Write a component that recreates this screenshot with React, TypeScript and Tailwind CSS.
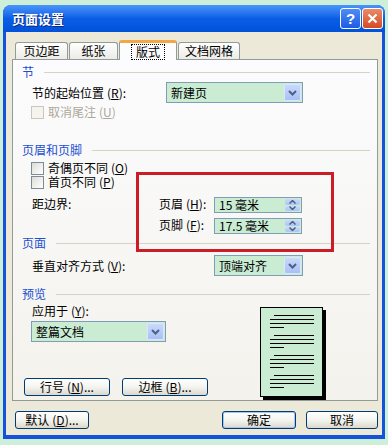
import type { ReactNode } from "react";

const Key = ({ k }: { k: string }) => (
    <span className="ml-[3px]">
        (<span className="underline">{k}</span>)
    </span>
);

const Arrow = () => (
    <svg width="9" height="6" viewBox="0 0 9 6">
        <path d="M1 1l3.5 3.5L8 1" stroke="#4d6185" strokeWidth="2" fill="none" />
    </svg>
);

const Combo = ({ text, w }: { text: string; w: string }) => (
    <div className={`${w} h-[21px] flex border border-[#7f9db9] bg-[#c9ecd3]`}>
        <div className="flex-1 pl-[4px] flex items-center">{text}</div>
        <div className="w-[17px] m-px flex items-center justify-center rounded-[2px] border border-[#dbe5fd] bg-gradient-to-b from-[#c9d9fc] to-[#a9c0f4]">
            <Arrow />
        </div>
    </div>
);

const SpinBtn = ({ up }: { up?: boolean }) => (
    <div className="flex-1 flex items-center justify-center rounded-[2px] bg-gradient-to-b from-[#c9d9fc] to-[#adc3f5]">
        <svg width="7" height="4" viewBox="0 0 7 4">
            <path d={up ? "M0.5 3.5L3.5 0.5L6.5 3.5" : "M0.5 0.5L3.5 3.5L6.5 0.5"} stroke="#4d6185" strokeWidth="1.5" fill="none" />
        </svg>
    </div>
);

const Spin = ({ text }: { text: string }) => (
    <div className="w-[88px] h-[16px] flex border border-[#7f9db9] bg-[#c9ecd3]">
        <div className="flex-1 pl-[4px] flex items-center leading-none">{text}</div>
        <div className="w-[15px] m-px flex flex-col gap-px">
            <SpinBtn up />
            <SpinBtn />
        </div>
    </div>
);

const Section = ({ title, className }: { title: string; className: string }) => (
    <div className={`flex items-center h-[14px] ${className}`}>
        <span className="text-[#1b4fd1] leading-none">{title}</span>
        <div className="flex-1 h-px bg-[#d6d3c6] ml-[10px] mr-[7px]" />
    </div>
);

const Check = ({ children, disabled, className }: { children: ReactNode; disabled?: boolean; className: string }) => (
    <div className={`flex items-center h-[14px] ml-[9px] ${className}`}>
        <div className={`w-[13px] h-[13px] border ${disabled ? "border-[#cac8bb] bg-[#f4f3ee]" : "border-[#7d8a98] bg-gradient-to-br from-[#dcdcd6] to-white"}`} />
        <span className={`ml-[4px] leading-none ${disabled ? "text-[#aca899]" : ""}`}>{children}</span>
    </div>
);

const Button = ({ children, w, main }: { children: ReactNode; w: string; main?: boolean }) => (
    <div className={`${w} h-[18px] rounded-[3px] border border-[#003c74] flex items-center justify-center bg-gradient-to-b from-white via-[#f4f4f0] to-[#dcd8cc] leading-none ${main ? "shadow-[inset_0_0_0_1px_#a9c4f2]" : ""}`}>
        {children}
    </div>
);

const Tab = ({ children, w }: { children: ReactNode; w: string }) => (
    <div className={`${w} h-[17px] mr-px border border-b-0 border-[#919b9c] rounded-t-[3px] bg-gradient-to-b from-white to-[#ecebe6] flex items-center justify-center leading-none`}>
        {children}
    </div>
);

const Page = () => (
    <div className="w-[63px] h-[90px] mt-[3px] ml-[38px] border border-black bg-[#c9ecd3] shadow-[3px_3px_0_#000] flex flex-col gap-[7px] pt-[7px] pl-[9px]">
        {[0, 1, 2, 3].map((g) => (
            <div key={g} className="flex flex-col gap-[3px]">
                <div className="ml-[4px] w-[40px] h-px bg-black" />
                <div className="w-[44px] h-px bg-black" />
                <div className="w-[44px] h-px bg-black" />
                <div className="w-[14px] h-px bg-black" />
            </div>
        ))}
    </div>
);

const App = () => {
    return (
        <div className="w-[388px] h-[445px] bg-[#cdeed8] pt-[5px] pl-[3px] font-['Noto_Sans_CJK_SC',sans-serif] text-[12px] text-black">
            <div className="w-[382px] h-[434px] rounded-t-[8px] bg-[#1552dc] flex flex-col">
                <div className="h-[27px] flex items-center pl-[9px] pr-[2px] rounded-t-[8px] bg-gradient-to-b from-[#4a95fb] via-[#0a5ee6] to-[#0251d9]">
                    <span className="text-white font-bold text-[13px] [text-shadow:1px_1px_#0a2a84]">页面设置</span>
                    <div className="ml-auto w-[21px] h-[21px] rounded-[3px] border border-white bg-gradient-to-b from-[#4f8cf6] to-[#1f5be2] flex items-center justify-center text-white font-bold text-[15px] leading-none font-['Liberation_Sans',sans-serif]">
                        ?
                    </div>
                    <div className="ml-px w-[21px] h-[21px] rounded-[3px] border border-white bg-gradient-to-b from-[#e98a68] to-[#d5481f] flex items-center justify-center">
                        <svg width="11" height="11" viewBox="0 0 11 11">
                            <path d="M1.5 1.5l8 8M9.5 1.5l-8 8" stroke="white" strokeWidth="2.2" />
                        </svg>
                    </div>
                </div>

                <div className="mx-[3px] mb-[4px] flex-1 bg-[#ece9d8] pt-[8px]">
                    <div className="flex items-end h-[19px] pl-[9px]">
                        <Tab w="w-[53px]">页边距</Tab>
                        <Tab w="w-[49px]">纸张</Tab>
                        <div className="w-[58px] h-[20px] -mb-px mr-px relative z-10 border border-b-0 border-[#919b9c] border-t-[3px] border-t-[#f2a842] rounded-t-[3px] bg-[#fcfcfe] flex items-center justify-center leading-none">
                            <span className="border border-dotted border-black px-[4px] py-px">版式</span>
                        </div>
                        <Tab w="w-[62px]">文档网格</Tab>
                    </div>

                    <div className="ml-[6px] w-[366px] h-[342px] border border-[#919b9c] bg-gradient-to-b from-[#fcfcfe] to-[#f3f2ec] relative pl-[9px] pt-[5px]">
                        <Section title="节" className="" />
                        <div className="flex items-center mt-[3px] ml-[10px]">
                            <div className="w-[134px]">
                                节的起始位置<Key k="R" />:
                            </div>
                            <Combo text="新建页" w="w-[137px]" />
                        </div>
                        <Check disabled className="mt-[2px]">
                            取消尾注<Key k="U" />
                        </Check>

                        <Section title="页眉和页脚" className="mt-[24px]" />
                        <Check className="mt-[4px]">
                            奇偶页不同<Key k="O" />
                        </Check>
                        <Check className="">
                            首页不同<Key k="P" />
                        </Check>
                        <div className="flex mt-[8px] ml-[10px]">
                            <div className="w-[127px] leading-none pt-px">距边界:</div>
                            <div className="flex flex-col gap-[5px]">
                                <div className="flex items-center">
                                    <div className="w-[55px] leading-none -mt-[2px]">
                                        页眉<Key k="H" />:
                                    </div>
                                    <Spin text="15 毫米" />
                                </div>
                                <div className="flex items-center">
                                    <div className="w-[55px] leading-none -mt-[2px]">
                                        页脚<Key k="F" />:
                                    </div>
                                    <Spin text="17.5 毫米" />
                                </div>
                            </div>
                        </div>

                        <Section title="页面" className="mt-[2px]" />
                        <div className="flex items-center mt-[5px] ml-[10px]">
                            <div className="w-[182px]">
                                垂直对齐方式<Key k="V" />:
                            </div>
                            <Combo text="顶端对齐" w="w-[89px]" />
                        </div>

                        <Section title="预览" className="mt-[11px]" />
                        <div className="flex mt-[3px]">
                            <div className="w-[200px] flex flex-col">
                                <div className="h-[14px] ml-[10px] leading-none flex items-center">
                                    应用于<Key k="Y" />:
                                </div>
                                <div className="mt-[3px] ml-[9px]">
                                    <Combo text="整篇文档" w="w-[135px]" />
                                </div>
                                <div className="flex mt-[36px] ml-[2px] gap-[12px]">
                                    <Button w="w-[86px]">
                                        行号<Key k="N" />...
                                    </Button>
                                    <Button w="w-[86px]">
                                        边框<Key k="B" />...
                                    </Button>
                                </div>
                            </div>
                            <Page />
                        </div>

                        <div className="absolute left-[123px] top-[112px] w-[198px] h-[80px] border-[3px] border-[#cc1c26]" />
                    </div>

                    <div className="flex mt-[10px] ml-[9px] mr-[4px]">
                        <Button w="w-[74px]">
                            默认<Key k="D" />...
                        </Button>
                        <div className="ml-auto">
                            <Button w="w-[74px]" main>
                                确定
                            </Button>
                        </div>
                        <div className="ml-[10px]">
                            <Button w="w-[72px]">取消</Button>
                        </div>
                    </div>
                </div>
            </div>
        </div>
    );
};

export default App;
